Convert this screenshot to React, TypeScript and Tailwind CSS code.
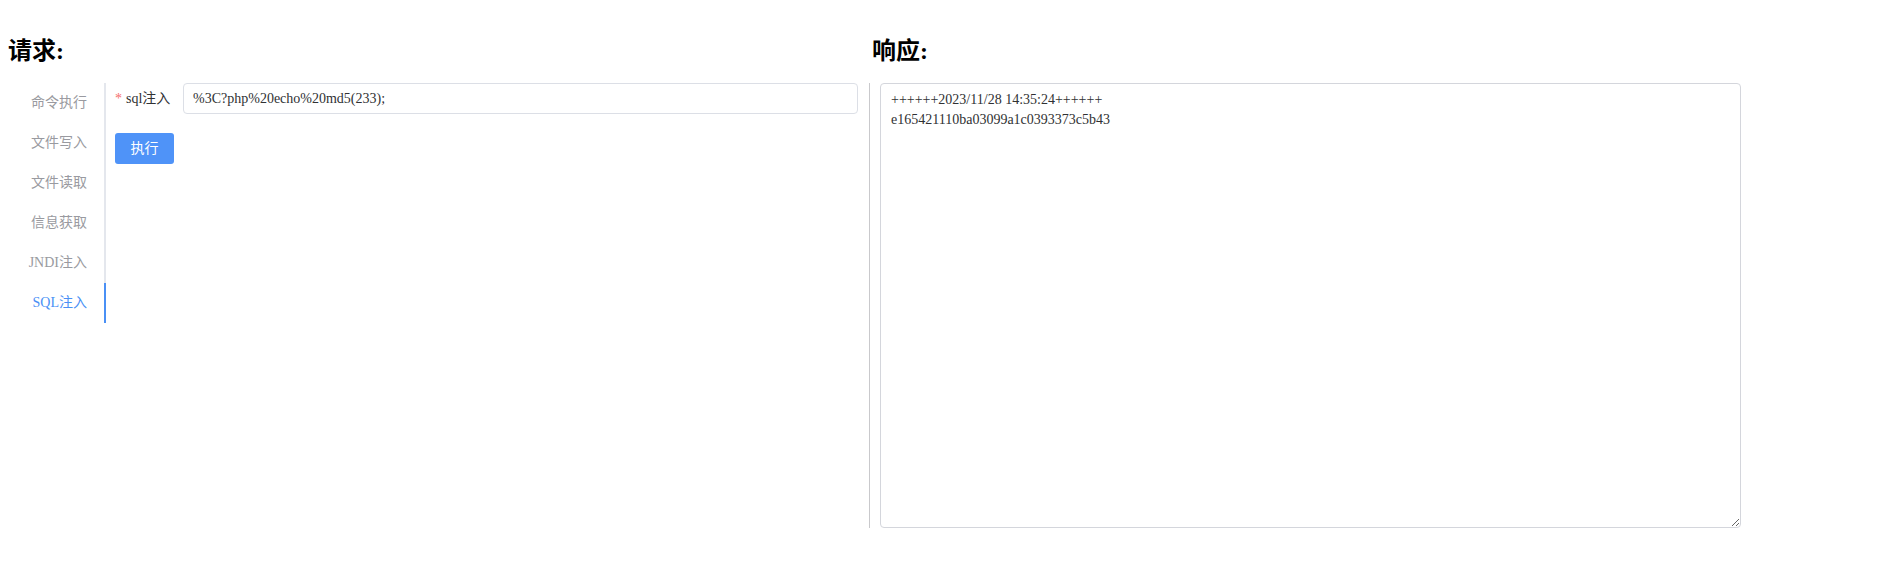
import React from 'react'

const font = { fontFamily: '"Liberation Serif", "Noto Sans CJK SC", serif' }

const tabs = ['命令执行', '文件写入', '文件读取', '信息获取', 'JNDI注入', 'SQL注入']

const TabNav: React.FC<{ active: number }> = ({ active }) => (
  <div className="relative w-[98px] border-r-2 border-[#e4e7ed] self-start">
    {tabs.map((t, i) => (
      <div
        key={t}
        className={
          'h-10 leading-10 pr-[17px] text-right text-sm ' +
          (i === active ? 'text-[#4a90f5]' : 'text-[#999aa0]')
        }
      >
        {t}
      </div>
    ))}
    <div className="absolute right-[-2px] bottom-0 h-10 w-[2px] bg-[#4a90f5]" />
  </div>
)

export default function App() {
  return (
    <div className="min-h-screen bg-white text-[#303133]" style={font}>
      <div className="flex pt-[35px] pl-2">
        <h2 className="w-[864px] text-2xl font-bold leading-8 text-black">请求:</h2>
        <h2 className="text-2xl font-bold leading-8 text-black">响应:</h2>
      </div>
      <div className="flex pl-2 mt-4">
        <div className="flex w-[861px]">
          <TabNav active={5} />
          <div className="flex-1 pl-[9px]">
            <div className="flex items-center h-[31px]">
              <label className="w-[68px] shrink-0 text-sm text-[#303133]">
                <span className="text-[#f56c6c] mr-1">*</span>sql注入
              </label>
              <div className="flex items-center h-[31px] w-[675px] border border-[#dcdfe6] rounded px-[9px] text-sm text-[#303133]">
                %3C?php%20echo%20md5(233);
              </div>
            </div>
            <button className="mt-[19px] h-[31px] w-[59px] rounded-[3px] bg-[#4f93f8] text-sm text-white">
              执行
            </button>
          </div>
        </div>
        <div className="border-l border-[#c9c9cc] pl-[10px]">
          <textarea
            readOnly
            className="block h-[445px] w-[861px] border border-[#d4d6dc] rounded px-[10px] pt-[6px] text-sm leading-5 text-[#303133] outline-none"
            style={font}
            defaultValue={'++++++2023/11/28 14:35:24++++++\ne165421110ba03099a1c0393373c5b43'}
          />
        </div>
      </div>
    </div>
  )
}
